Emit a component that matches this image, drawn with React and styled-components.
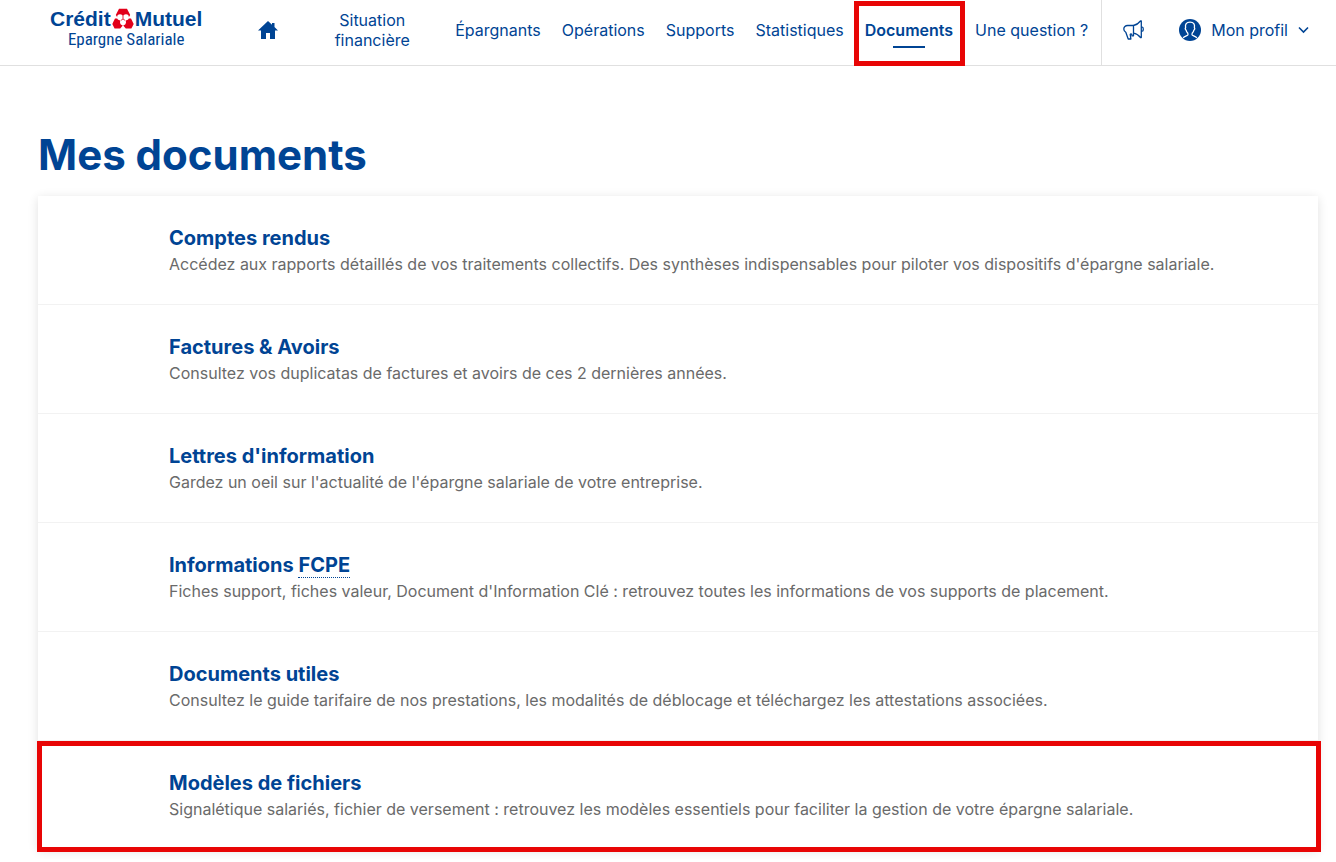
import React from 'react';
import styled, { createGlobalStyle, css } from 'styled-components';

const GlobalStyle = createGlobalStyle`
  * {
    box-sizing: border-box;
  }

  body {
    margin: 0;
    background: #fff;
    color: #6a6a6a;
    font-family: Inter, sans-serif;
    font-size: 16px;
    font-weight: 400;
    line-height: 20px;
  }
`;

const marked = css`
  position: relative;

  &::before {
    content: '';
    position: absolute;
    inset: ${props => props.$inset || '0'};
    border: 5px solid #e80505;
    pointer-events: none;
  }
`;

const Header = styled.header`
  display: flex;
  align-items: stretch;
  height: 66px;
  border-bottom: 1px solid #e0e0e0;
`;

const Logo = styled.a`
  display: flex;
  flex-direction: column;
  align-items: center;
  margin-left: 50px;
  padding-top: 7px;
  color: #004494;
  text-decoration: none;
`;

const LogoName = styled.span`
  display: flex;
  align-items: center;
  gap: 1px;
  height: 24px;
  font: bold 21px/24px 'Liberation Sans', Arial, sans-serif;
`;

const LogoBranch = styled.span`
  font: 17px/16px 'Liberation Sans Narrow', 'Roboto Condensed', 'Liberation Sans', sans-serif;
`;

const Nav = styled.nav`
  display: flex;
  margin-left: auto;
`;

const NavLink = styled.a`
  display: flex;
  flex-direction: column;
  align-items: center;
  justify-content: center;
  width: ${props => props.$width || 'auto'};
  padding: 0 ${props => props.$wide ? '32px' : '10px'} 6px ${props => props.$wide ? '32px' : '11px'};
  color: #004494;
  text-align: center;
  text-decoration: none;

  ${props => props.$active && css`
    ${marked}
    padding-right: 11px;
    font-weight: 600;

    &::after {
      content: '';
      position: absolute;
      top: 46px;
      width: 32px;
      height: 2px;
      background: #004494;
    }
  `}
`;

const Tools = styled.div`
  display: flex;
  align-items: center;
  margin-left: 3px;
  padding: 0 27px 5px 21px;
  border-left: 1px solid #e0e0e0;
`;

const ToolButton = styled.button`
  display: flex;
  align-items: center;
  gap: 10px;
  padding: 0;
  border: 0;
  background: none;
  color: #004494;
  font: inherit;

  & + & {
    margin-left: 34px;
  }
`;

const Main = styled.main`
  padding: 63px 18px 10px 38px;
`;

const Title = styled.h1`
  margin: 0 0 15px;
  color: #004494;
  font-size: 42px;
  font-weight: 700;
  line-height: 52px;
`;

const List = styled.ul`
  margin: 0;
  padding: 0;
  list-style: none;
  box-shadow: 0 2px 10px rgba(0, 0, 0, 0.12);
`;

const Row = styled.li`
  padding: 29px 24px 27px 131px;

  &:not(:last-child) {
    border-bottom: 1px solid #f2f2f2;
  }

  ${props => props.$marked && marked}
`;

const RowTitle = styled.h2`
  margin: 0;
  font-size: 20px;
  font-weight: 700;
  line-height: 26px;
`;

const RowLink = styled.a`
  color: #004494;
  text-decoration: none;
`;

const Abbr = styled.abbr`
  border-bottom: 1px dotted #004494;
  text-decoration: none;
`;

const RowText = styled.p`
  margin: 0;
  line-height: 26px;
`;

const Emblem = () => (
  <svg width="22" height="22" viewBox="0 0 22 22" aria-hidden="true">
    <g fill="#e2001a">
      <path d="M7 .8h8l3.200 6.200-1.700 2.800H5.500L3.800 7z" />
      <path d="M3 10.600h3.500l3.700 5.600.4 1.600-2.400 2.800H2.600L.3 16z" />
      <path d="M19 10.600h-3.500l-3.700 5.600-.4 1.600 2.400 2.800h5.600l2.300-4.600z" />
    </g>
    <g fill="#fff">
      <circle cx="8" cy="9.200" r="2.900" />
      <circle cx="14" cy="9.200" r="2.900" />
      <circle cx="11" cy="14.300" r="2.900" />
    </g>
    <path d="M11 11V8.300M11 11l-2.300 1.500M11 11l2.300 1.500" stroke="#e2001a" strokeWidth=".8" />
  </svg>
);

const HomeIcon = () => (
  <svg width="20" height="18" viewBox="0 0 20 18" aria-hidden="true">
    <path d="M10 0L0 9.500h3V18h5v-6h4v6h5V9.500h3L16.500 6V2H14v1.700z" fill="#004494" />
  </svg>
);

const MegaphoneIcon = () => (
  <svg width="22" height="20" viewBox="0 0 22 20" fill="none" stroke="#004494" strokeWidth="1.300" strokeLinejoin="round" aria-hidden="true">
    <path d="M10.500 5.500c2.800-.5 5-2 7-4.500h.8v16.500h-.8c-2-2.400-4.200-3.900-7-4.300zM18.300 7.200h1c1.300 0 1.300 4 0 4h-1" />
    <path d="M10.500 5.500H4.600C2.400 5.500.8 7 .8 9c0 1.600.9 2.600 2 3.200L5.200 19h2.700l-.7-4.500c.4-1 1.500-.9 1.600.1l.2 1.200h1.500v-2.600" />
  </svg>
);

const ProfileIcon = () => (
  <svg width="22" height="22" viewBox="0 0 22 22" aria-hidden="true">
    <circle cx="11" cy="11" r="11" fill="#004494" />
    <path
      d="M4.200 18.800c.9-1.500 3.700-1.700 4.500-2.700.4-.6.3-1.500 0-2.100-1-.9-1.400-1.900-1.600-2.900-.9-.4-1.100-1.800-.5-2.300C6 5 7.300 3.200 11 3.200S16 5 15.400 8.800c.6.500.4 1.900-.5 2.300-.2 1-.6 2-1.600 2.900-.3.600-.4 1.500 0 2.100.8 1 3.600 1.200 4.500 2.700"
      fill="none"
      stroke="#fff"
      strokeWidth="1.300"
    />
  </svg>
);

const Chevron = () => (
  <svg width="11" height="8" viewBox="0 0 11 8" aria-hidden="true">
    <path d="M1 1.500l4.500 4.500L10 1.500" fill="none" stroke="#004494" strokeWidth="1.600" />
  </svg>
);

const links = ['Épargnants', 'Opérations', 'Supports', 'Statistiques', 'Documents', 'Une question ?'];

const documents = [
  {
    title: 'Comptes rendus',
    text: "Accédez aux rapports détaillés de vos traitements collectifs. Des synthèses indispensables pour piloter vos dispositifs d'épargne salariale.",
  },
  {
    title: 'Factures & Avoirs',
    text: 'Consultez vos duplicatas de factures et avoirs de ces 2 dernières années.',
  },
  {
    title: "Lettres d'information",
    text: "Gardez un oeil sur l'actualité de l'épargne salariale de votre entreprise.",
  },
  {
    title: <>Informations <Abbr title="Fonds Commun de Placement d'Entreprise">FCPE</Abbr></>,
    text: "Fiches support, fiches valeur, Document d'Information Clé : retrouvez toutes les informations de vos supports de placement.",
  },
  {
    title: 'Documents utiles',
    text: 'Consultez le guide tarifaire de nos prestations, les modalités de déblocage et téléchargez les attestations associées.',
  },
  {
    title: 'Modèles de fichiers',
    text: 'Signalétique salariés, fichier de versement : retrouvez les modèles essentiels pour faciliter la gestion de votre épargne salariale.',
    marked: true,
  },
];

const App = () => (
  <>
    <GlobalStyle />
    <Header>
      <Logo href="#">
        <LogoName>Crédit<Emblem />Mutuel</LogoName>
        <LogoBranch>Epargne Salariale</LogoBranch>
      </Logo>
      <Nav>
        <NavLink href="#" $width="66px" aria-label="Accueil"><HomeIcon /></NavLink>
        <NavLink href="#" $width="144px" $wide>Situation financière</NavLink>
        {links.map(label => (
          <NavLink
            key={label}
            href="#"
            $active={label === 'Documents'}
            $inset="1px -1px -1px 0"
          >
            {label}
          </NavLink>
        ))}
      </Nav>
      <Tools>
        <ToolButton aria-label="Actualités"><MegaphoneIcon /></ToolButton>
        <ToolButton><ProfileIcon />Mon profil<Chevron /></ToolButton>
      </Tools>
    </Header>
    <Main>
      <Title>Mes documents</Title>
      <List>
        {documents.map((item, i) => (
          <Row key={i} $marked={item.marked} $inset="0 -3px -3px -1px">
            <RowTitle><RowLink href="#">{item.title}</RowLink></RowTitle>
            <RowText>{item.text}</RowText>
          </Row>
        ))}
      </List>
    </Main>
  </>
);

export default App;
